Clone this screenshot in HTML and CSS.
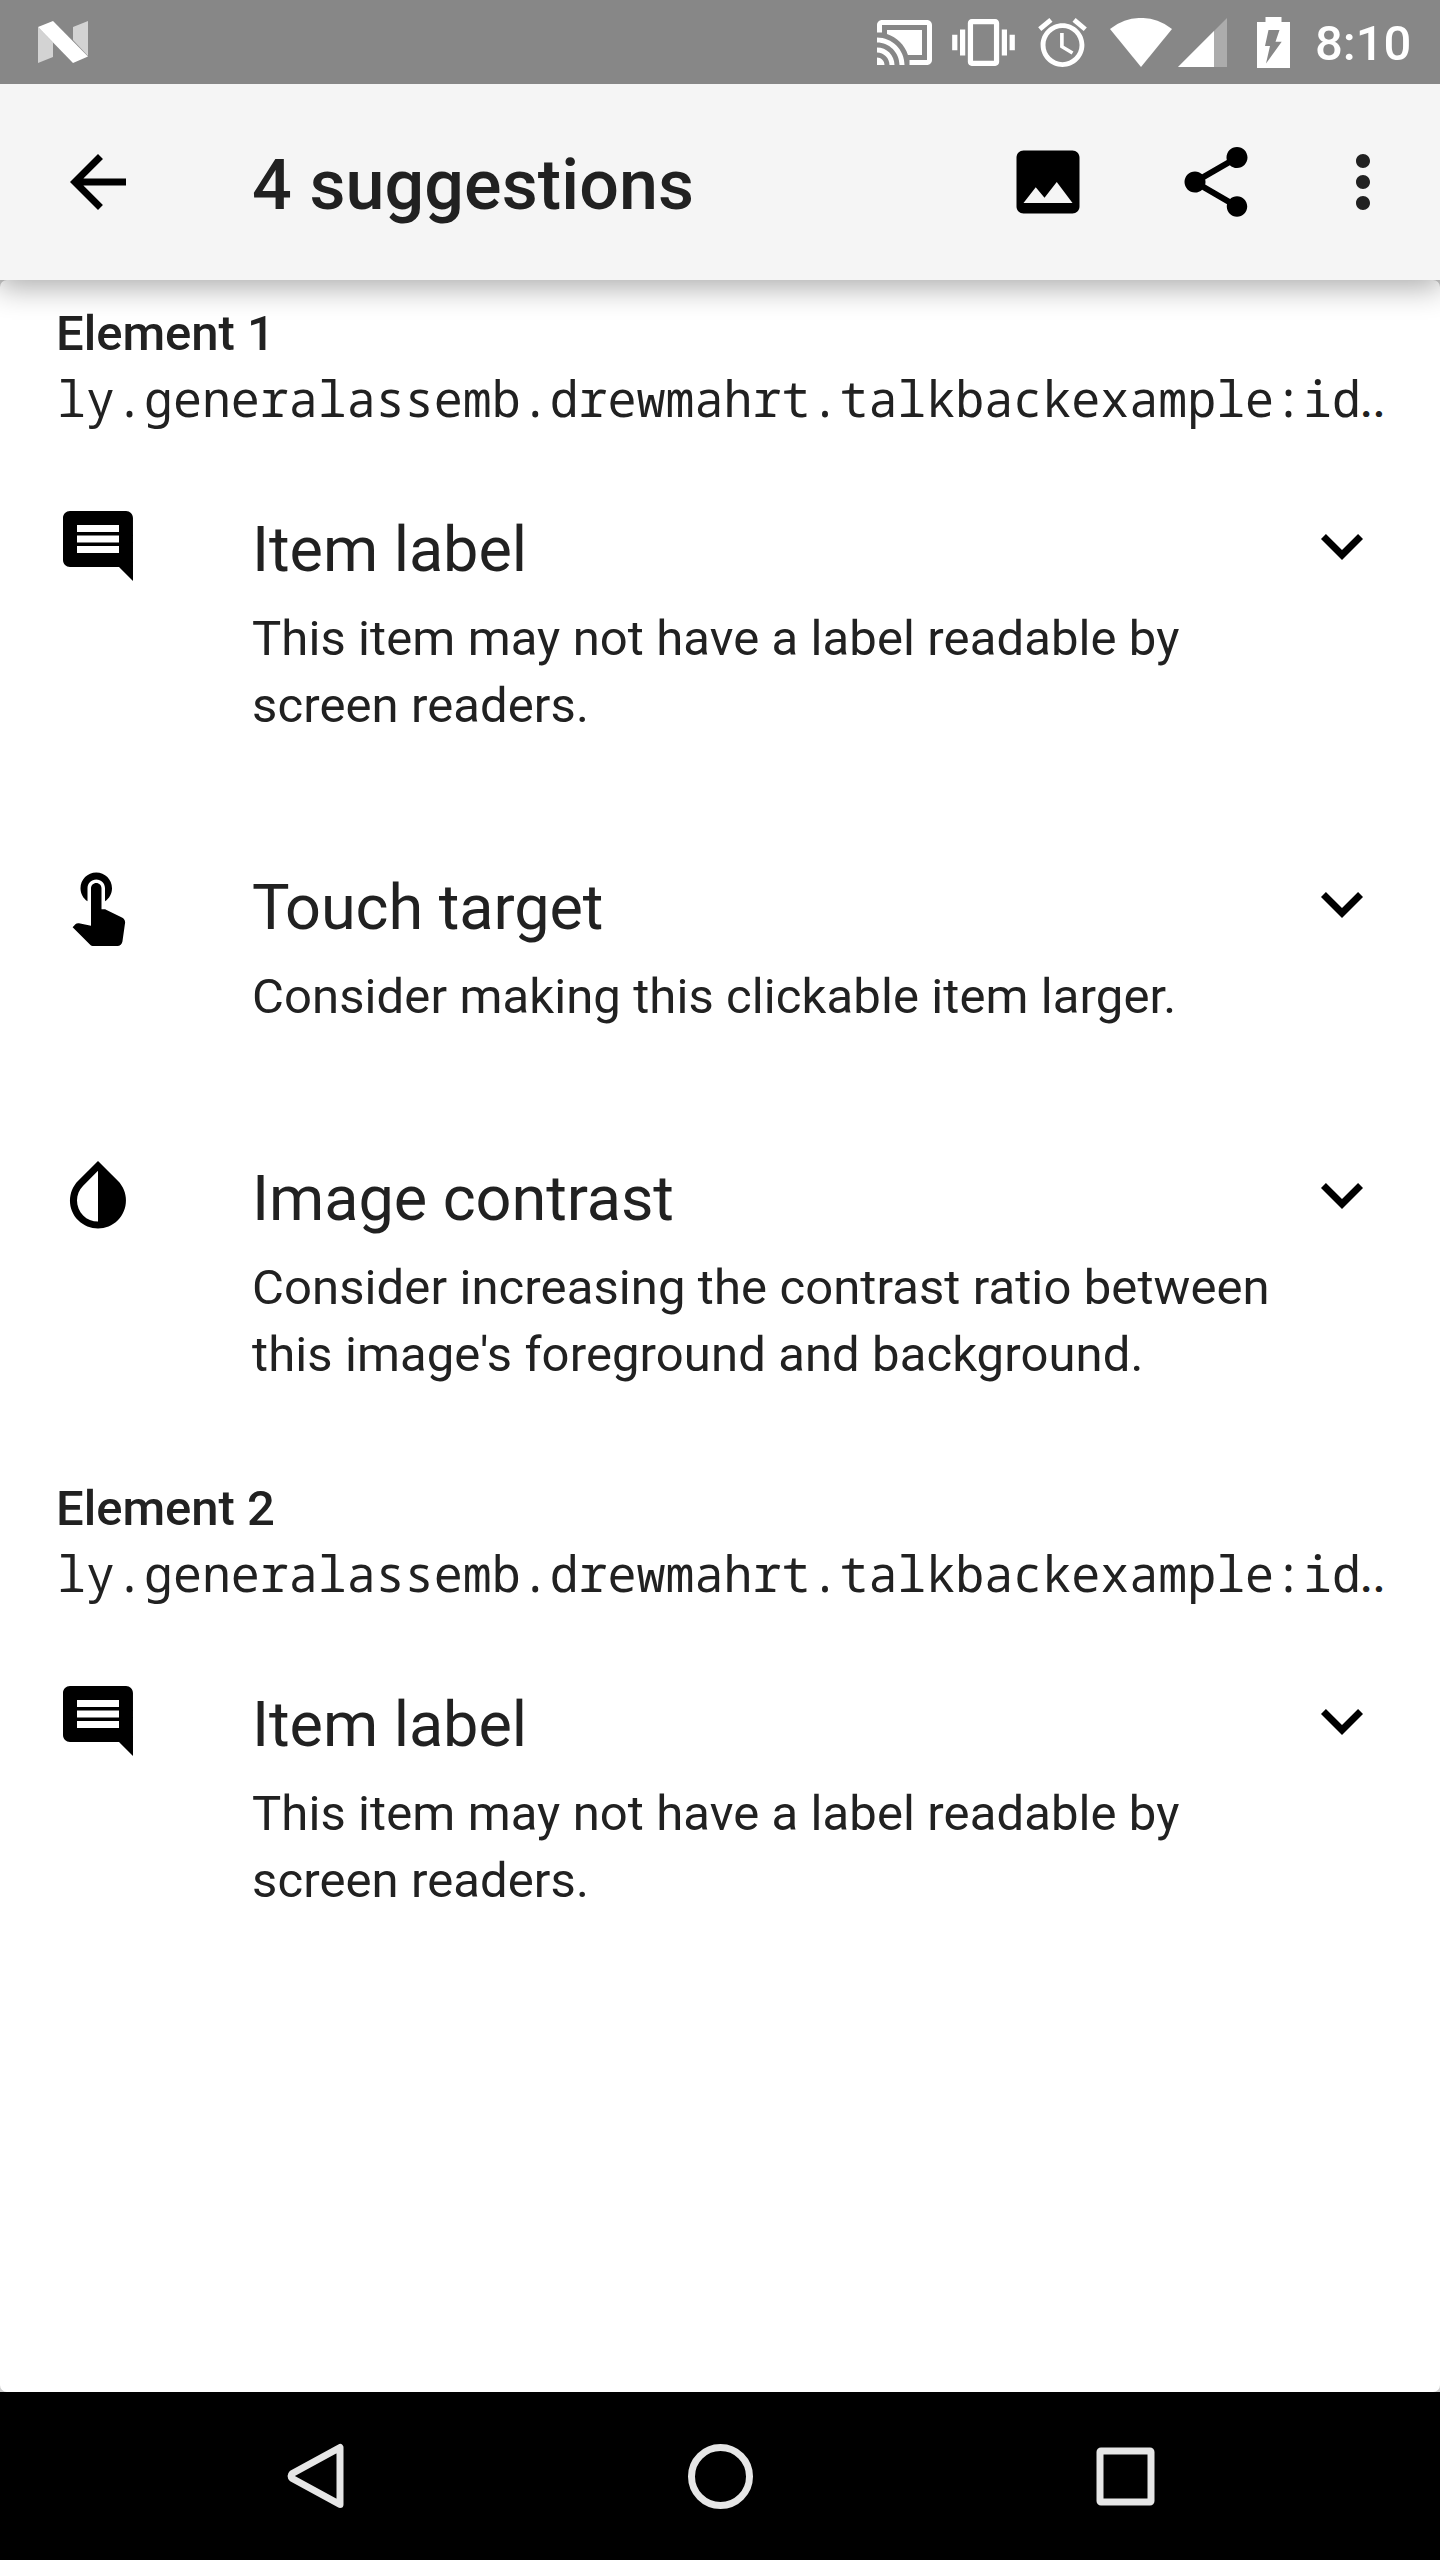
FILE: index.html
```html
<!DOCTYPE html>
<html lang="en">
<head>
<meta charset="utf-8">
<title>4 suggestions</title>
<link rel="stylesheet" href="styles.css">
</head>
<body>
<svg class="defs" width="0" height="0" aria-hidden="true">
  <symbol id="comment" viewBox="0 0 24 24"><path d="M21.99 4c0-1.1-.89-2-1.99-2H4c-1.1 0-2 .9-2 2v12c0 1.1.9 2 2 2h14l4 4-.01-18zM18 14H6v-2h12v2zm0-3H6V9h12v2zm0-3H6V6h12v2z"/></symbol>
  <symbol id="chevron" viewBox="0 0 24 24"><path d="M16.59 8.59L12 13.17 7.41 8.59 6 10l6 6 6-6z"/></symbol>
  <symbol id="touch" viewBox="0 0 24 24"><path d="M9 11.24V7.5C9 6.12 10.12 5 11.5 5S14 6.12 14 7.5v3.74c1.21-.81 2-2.18 2-3.74C16 5.01 13.99 3 11.5 3S7 5.01 7 7.5c0 1.56.79 2.93 2 3.74zm9.84 4.63l-4.54-2.26c-.17-.07-.35-.11-.54-.11H13v-6c0-.83-.67-1.5-1.5-1.5S10 6.67 10 7.5v10.74l-3.43-.72c-.08-.01-.15-.03-.24-.03-.31 0-.59.13-.79.33l-.79.8 4.94 4.94c.27.27.65.44 1.06.44h6.79c.75 0 1.33-.55 1.44-1.28l.75-5.27c.01-.07.02-.14.02-.2 0-.62-.38-1.16-.91-1.38z"/></symbol>
  <symbol id="contrast" viewBox="0 0 24 24"><path d="M17.66 7.93L12 2.27 6.34 7.93c-3.12 3.12-3.12 8.19 0 11.31C7.9 20.8 9.95 21.58 12 21.58c2.05 0 4.1-.78 5.66-2.34 3.12-3.12 3.12-8.19 0-11.31zM12 19.59c-1.6 0-3.11-.62-4.24-1.76C6.62 16.69 6 15.19 6 13.59s.62-3.11 1.76-4.24L12 5.1v14.49z"/></symbol>
</svg>

<div class="status-bar">
  <svg class="n-logo" viewBox="0 0 50 42"><path fill="#d3d3d3" d="M0 6l15 15.500V36L0 42zM35 6l15-6v35L35 19z"/><path fill="#fff" d="M0 6L15 0l35 35.500L35 42z"/></svg>
  <div class="status-icons">
    <svg class="cast" viewBox="1 3 22 18"><path d="M1 18v3h3c0-1.660-1.340-3-3-3zm0-4v2c2.760 0 5 2.240 5 5h2c0-3.870-3.130-7-7-7zm18-7H5v1.630c3.960 1.280 7.090 4.410 8.370 8.370H19V7zM1 10v2c4.970 0 9 4.030 9 9h2c0-6.080-4.930-11-11-11zm20-7H3c-1.100 0-2 .9-2 2v3h2V5h18v14h-7v2h7c1.100 0 2-.9 2-2V5c0-1.100-.9-2-2-2z"/></svg>
    <svg class="vibrate" viewBox="0 3 24 18"><path d="M0 15h2V9H0v6zm3 2h2V7H3v10zm19-8v6h2V9h-2zm-3 8h2V7h-2v10zM16.500 3h-9C6.670 3 6 3.670 6 4.500v15c0 .83.67 1.500 1.500 1.500h9c.83 0 1.500-.67 1.500-1.500v-15c0-.83-.67-1.500-1.500-1.500zM16 19H8V5h8v14z"/></svg>
    <svg class="alarm" viewBox="2 1.860 20 20.140"><path d="M22 5.720l-4.600-3.860-1.290 1.530 4.600 3.860L22 5.720zM7.880 3.390L6.600 1.860 2 5.710l1.290 1.530 4.590-3.850zM12.500 8H11v6l4.750 2.850.75-1.230-4-2.370V8zM12 4c-4.970 0-9 4.030-9 9s4.020 9 9 9c4.970 0 9-4.030 9-9s-4.030-9-9-9zm0 16c-3.870 0-7-3.130-7-7s3.130-7 7-7 7 3.130 7 7-3.130 7-7 7z"/></svg>
    <svg class="wifi" viewBox="0 0 62 49"><path d="M31 49L0 11A49 49 0 0 1 62 11z"/></svg>
    <svg class="signal" viewBox="0 0 49 49"><path fill="#acacac" d="M0 49L49 0v49z"/><path d="M0 49l36-36v36z"/></svg>
    <svg class="battery" viewBox="0 0 33 51"><path fill-rule="evenodd" d="M8.500 0h16v5H33v46H0V5h8.500zM11.500 13L8 29h5L9 46.500 24.700 24.700h-6.200L22.500 13z"/></svg>
    <span class="clock">8:10</span>
  </div>
</div>

<header class="app-bar">
  <svg class="icon" viewBox="0 0 24 24"><path d="M20 11H7.830l5.590-5.590L12 4l-8 8 8 8 1.410-1.410L7.830 13H20v-2z"/></svg>
  <h1 class="title">4 suggestions</h1>
  <div class="actions">
    <svg class="icon" viewBox="0 0 24 24"><path d="M21 19V5c0-1.100-.9-2-2-2H5c-1.100 0-2 .9-2 2v14c0 1.100.9 2 2 2h14c1.100 0 2-.9 2-2zM8.500 13.500l2.500 3.010L14.500 12l4.500 6H5l3.500-4.500z"/></svg>
    <svg class="icon" viewBox="0 0 24 24"><path d="M18 16.080c-.76 0-1.440.3-1.960.77L8.910 12.700c.05-.23.09-.46.09-.7s-.04-.47-.09-.7l7.050-4.110c.54.5 1.250.81 2.040.81 1.660 0 3-1.340 3-3s-1.340-3-3-3-3 1.340-3 3c0 .24.04.47.09.7L8.040 9.810C7.500 9.310 6.790 9 6 9c-1.660 0-3 1.340-3 3s1.340 3 3 3c.79 0 1.500-.31 2.040-.81l7.120 4.160c-.05.21-.08.43-.08.65 0 1.610 1.310 2.920 2.920 2.920 1.610 0 2.920-1.310 2.920-2.920s-1.310-2.920-2.920-2.920z"/></svg>
    <svg class="icon more" viewBox="0 0 24 24"><path d="M12 8c1.100 0 2-.9 2-2s-.9-2-2-2-2 .9-2 2 .9 2 2 2zm0 2c-1.100 0-2 .9-2 2s.9 2 2 2 2-.9 2-2-.9-2-2-2zm0 6c-1.100 0-2 .9-2 2s.9 2 2 2 2-.9 2-2-.9-2-2-2z"/></svg>
  </div>
</header>

<div class="backdrop">
<main class="list">
  <section>
    <h2 class="element">Element 1</h2>
    <p class="resource">ly.generalassemb.drewmahrt.talkbackexample:id<span class="dots">..</span></p>
    <article class="item">
      <svg class="icon"><use href="#comment"/></svg>
      <div class="text"><h3 class="name">Item label</h3><p class="desc">This item may not have a label readable by<br>screen readers.</p></div>
      <svg class="icon"><use href="#chevron"/></svg>
    </article>
    <article class="item">
      <svg class="icon"><use href="#touch"/></svg>
      <div class="text"><h3 class="name"><span class="kern">T</span>ouch target</h3><p class="desc">Consider making this clickable item larger.</p></div>
      <svg class="icon"><use href="#chevron"/></svg>
    </article>
    <article class="item">
      <svg class="icon"><use href="#contrast"/></svg>
      <div class="text"><h3 class="name">Image contrast</h3><p class="desc">Consider increasing the contrast ratio between<br>this image's foreground and background.</p></div>
      <svg class="icon"><use href="#chevron"/></svg>
    </article>
  </section>
  <section>
    <h2 class="element">Element 2</h2>
    <p class="resource">ly.generalassemb.drewmahrt.talkbackexample:id<span class="dots">..</span></p>
    <article class="item">
      <svg class="icon"><use href="#comment"/></svg>
      <div class="text"><h3 class="name">Item label</h3><p class="desc">This item may not have a label readable by<br>screen readers.</p></div>
      <svg class="icon"><use href="#chevron"/></svg>
    </article>
  </section>
</main>
</div>

<nav class="nav-bar">
  <svg class="nav-icon" viewBox="0 0 66 66"><path d="M58 4.500v57L10.300 35.500q-2.500-2.500 0-5z" stroke-linejoin="round"/></svg>
  <svg class="nav-icon" viewBox="0 0 66 66"><circle cx="33.500" cy="33.500" r="29"/></svg>
  <svg class="nav-icon" viewBox="0 0 66 66"><rect x="8" y="8" width="51" height="51" rx="1"/></svg>
</nav>
</body>
</html>
```
FILE: styles.css
```css
* { box-sizing: border-box; }
body {
  margin: 0;
  width: 1440px;
  height: 2560px;
  display: flex;
  flex-direction: column;
  overflow: hidden;
  font-family: Roboto, sans-serif;
  color: #212121;
  background: #000;
}
h1, h2, h3, p { margin: 0; }
svg { display: block; flex: none; }
.defs { display: none; }
.icon { width: 84px; height: 84px; fill: #000; }

.status-bar {
  height: 84px;
  padding: 0 28px 0 38px;
  background: #878787;
  display: flex;
  justify-content: space-between;
  align-items: center;
}
.n-logo { width: 50px; height: 42px; }
.status-icons { display: flex; align-items: center; fill: #fff; }
.cast { width: 55px; height: 45px; margin-right: 20px; }
.vibrate { width: 63px; height: 47px; margin-right: 23px; }
.alarm { width: 49px; height: 49px; margin-right: 23px; }
.wifi { width: 62px; height: 49px; margin-right: 6px; }
.signal { width: 49px; height: 49px; margin-right: 30px; }
.battery { width: 33px; height: 51px; margin-right: 25px; }
.clock { width: 97px; padding-top: 3px; font-size: 49px; font-weight: 500; line-height: 58px; color: #fff; }

.app-bar {
  height: 196px;
  padding: 0 35px 0 56px;
  background: #f5f5f5;
  display: flex;
  align-items: center;
  position: relative;
  z-index: 1;
  box-shadow: 0 6px 28px 2px rgba(0, 0, 0, .32);
  clip-path: inset(0 0 -60px 0);
}
.title { margin-left: 112px; flex: 1; font-size: 70px; font-weight: 500; line-height: 82px; letter-spacing: .1px; padding-top: 6px; }
.actions { display: flex; gap: 84px; }
.more { fill: #212121; margin-left: -21px; }

.backdrop { flex: 1; background: #ccc; display: flex; }
.list { flex: 1; padding-top: 24px; background: #fff; border-radius: 7px; }
.element { padding-left: 56px; font-size: 49px; font-weight: 500; line-height: 60px; }
.resource {
  height: 108px;
  padding: 5px 0 0 57px;
  font: 48.300px/58px "Droid Sans Mono", "Noto Sans Mono", "Liberation Mono", monospace;
  white-space: nowrap;
}
.dots { font-family: Roboto, sans-serif; font-size: 46px; font-weight: 500; margin-left: -1px; }
.item { display: flex; padding: 32px 56px 77px; }
.text { flex: 1; margin-left: 112px; padding-top: 9px; }
.name { font-size: 63px; font-weight: 400; line-height: 74px; letter-spacing: -.07px; }
.kern { letter-spacing: -4.500px; }
.desc { font-size: 49px; line-height: 67px; letter-spacing: .1px; margin: 18px 0 14px; white-space: nowrap; }

.nav-bar { height: 168px; background: #000; display: flex; justify-content: center; align-items: center; gap: 339px; }
.nav-icon { width: 66px; height: 66px; fill: none; stroke: #e6e6e6; stroke-width: 7; }
```
